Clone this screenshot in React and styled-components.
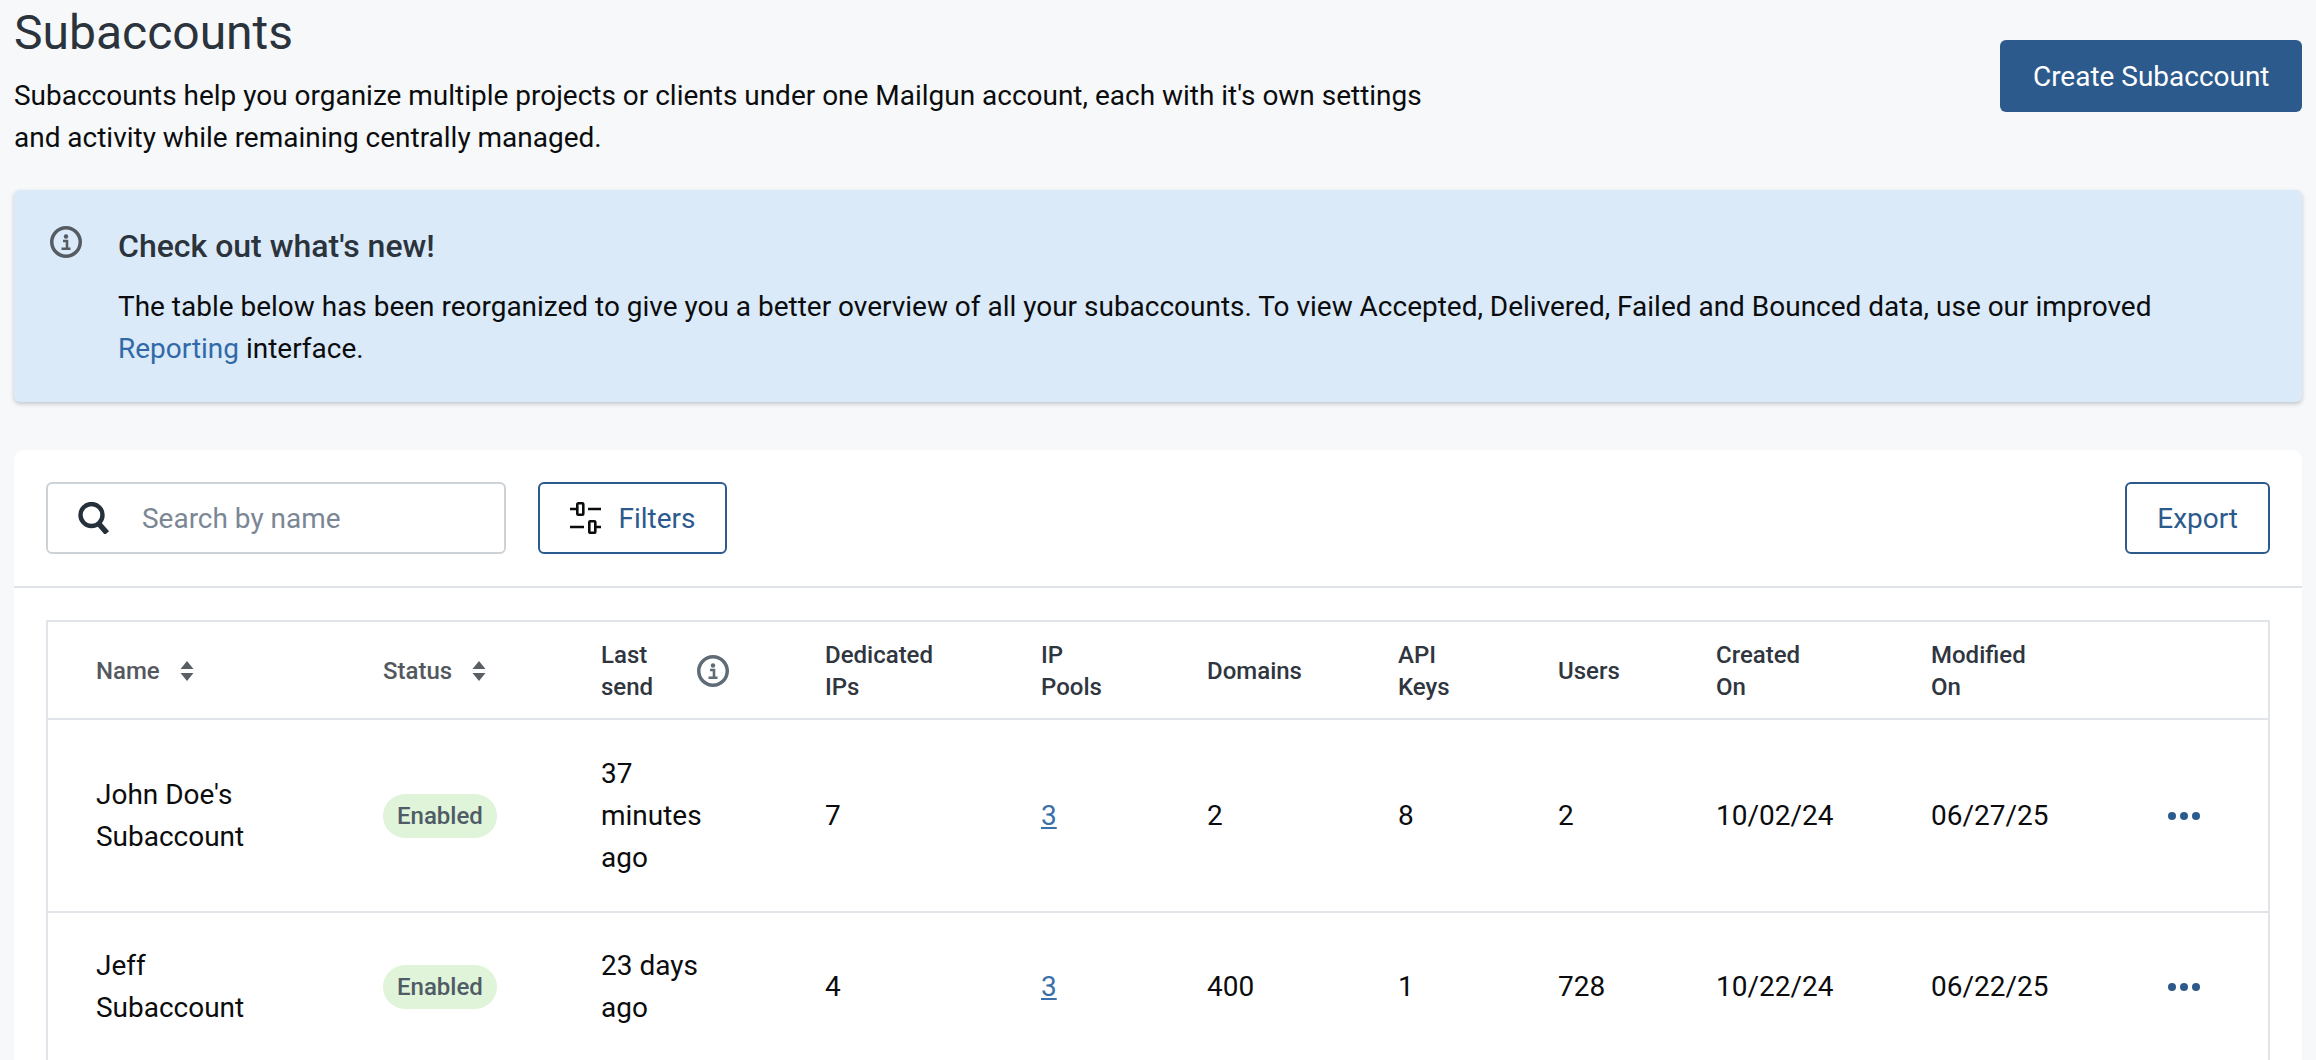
import React from "react";
import styled, { createGlobalStyle } from "styled-components";

const Global = createGlobalStyle`
  html, body { margin: 0; padding: 0; height: 100%; overflow: hidden; background: #f7f8fa; }
  body { font-family: Roboto, "Liberation Sans", sans-serif; font-size: 27.98px; line-height: 42px; color: #0b0c0e; }
  * { box-sizing: border-box; }
`;

const Page = styled.div`
  height: 1060px;
  overflow: hidden;
  padding: 0 14px;
`;
const Header = styled.header`
  display: flex;
  justify-content: space-between;
  align-items: flex-start;
  margin-bottom: 31px;
`;
const Title = styled.h1`
  margin: 3px 0 12px;
  font-size: 48px;
  line-height: 60px;
  font-weight: 400;
  color: #2b333d;
`;
const Description = styled.p`
  margin: 0;
  max-width: 1440px;
`;
const PrimaryButton = styled.button`
  margin-top: 40px;
  height: 72px;
  padding: 0 32.5px;
  border: 0;
  border-radius: 6px;
  background: #2c5a8c;
  color: #fff;
  font: 400 27.98px Roboto, sans-serif;
`;
const Alert = styled.section`
  display: flex;
  gap: 37px;
  padding: 36px 36px 32px 36px;
  margin-bottom: 48px;
  border-radius: 6px;
  background: #dbeaf9;
  box-shadow: 0 2px 4px rgba(40, 50, 60, 0.25);
`;
const AlertContent = styled.div`
  margin-left: -1px;
  padding-top: 1px;
`;
const AlertTitle = styled.h2`
  margin: 0 0 21px;
  font-size: 32px;
  line-height: 38px;
  font-weight: 500;
  color: #2b333d;
`;
const AlertText = styled.p`
  margin: 0;
`;
const Link = styled.a`
  color: #3169a8;
`;
const Card = styled.section`
  background: #fff;
  border-radius: 10px 10px 0 0;
`;
const Toolbar = styled.div`
  display: flex;
  align-items: center;
  gap: 32px;
  padding: 32px;
  border-bottom: 2px solid #e0e4e8;
`;
const SearchBox = styled.label`
  display: flex;
  align-items: center;
  gap: 32px;
  width: 460px;
  height: 72px;
  padding: 0 30px;
  border: 2px solid #cdd2d7;
  border-radius: 6px;
  background: #fff;
`;
const SearchInput = styled.input`
  flex: 1;
  min-width: 0;
  border: 0;
  outline: 0;
  padding: 0;
  background: transparent;
  font: 400 27.98px Roboto, sans-serif;
  &::placeholder { color: #7b8794; opacity: 1; }
`;
const OutlineButton = styled.button`
  display: flex;
  align-items: center;
  gap: ${(p) => (p.$icon ? "17px" : "0")};
  height: 72px;
  padding: 0 ${(p) => (p.$icon ? "29.5px" : "30px")};
  margin-left: ${(p) => (p.$end ? "auto" : "0")};
  border: 2px solid #2c5a8c;
  border-radius: 6px;
  background: #fff;
  color: #2c5a8c;
  font: 400 27.98px Roboto, sans-serif;
`;
const CardBody = styled.div`
  padding: 32px;
`;
const Table = styled.table`
  width: 100%;
  table-layout: fixed;
  border-collapse: separate;
  border-spacing: 0;
  border: 2px solid #e1e5e9;
  border-bottom: 0;
`;
const Th = styled.th`
  height: 98px;
  padding: 2px 0 0 ${(p) => (p.$first ? "48px" : "0")};
  text-align: left;
  font-size: 24px;
  line-height: 32px;
  font-weight: 500;
  color: ${(p) => (p.$sort ? "#53585e" : "#2f3640")};
  border-bottom: 2px solid #e1e5e9;
`;
const HeadInner = styled.span`
  display: flex;
  align-items: center;
  gap: ${(p) => p.$gap || "20px"};
`;
const Row = styled.tr`
  height: ${(p) => p.$height}px;
`;
const Td = styled.td`
  padding: 0 0 0 ${(p) => (p.$first ? "48px" : "0")};
  vertical-align: middle;
  border-bottom: 2px solid #e1e5e9;
`;
const Wrap = styled.span`
  display: block;
  max-width: ${(p) => p.$max};
`;
const Badge = styled.span`
  display: inline-flex;
  align-items: center;
  height: 44px;
  padding: 0 14px;
  border-radius: 22px;
  background: #dff4d8;
  color: #4f5b66;
  font-size: 24px;
  font-weight: 500;
  vertical-align: middle;
`;
const CountLink = styled.a`
  color: #3a6fa8;
  text-decoration: underline;
`;

const InfoIcon = ({ color = "#5f6b76" }) => (
  <svg width="32" height="32" viewBox="0 0 32 32" fill="none" style={{ flex: "none" }}>
    <circle cx="16" cy="16" r="14.25" stroke={color} strokeWidth="3.5" />
    <circle cx="16" cy="10.5" r="2.2" fill={color} />
    <path d="M13 15h4v7M11.5 22.8h9" stroke={color} strokeWidth="2.6" />
  </svg>
);
const SortIcon = () => (
  <svg width="14" height="20" viewBox="0 0 14 20" fill="#5a5f66" style={{ flex: "none" }}>
    <path d="M7 0l6.5 8H.5zM7 20L.5 12h13z" />
  </svg>
);
const SearchIcon = () => (
  <svg width="32" height="32" viewBox="0 0 32 32" fill="none" stroke="#26303a" style={{ flex: "none" }}>
    <circle cx="13.5" cy="13" r="11" strokeWidth="4.4" />
    <path d="M21 22l8 9" strokeWidth="5.5" />
  </svg>
);
const FiltersIcon = () => (
  <svg width="32" height="32" viewBox="0 0 32 32" fill="none" stroke="#0b0c0e" strokeWidth="2.6" style={{ flex: "none" }}>
    <rect x="7.3" y="1.3" width="6" height="11.5" rx="1" />
    <rect x="19.3" y="19.3" width="6" height="11.5" rx="1" />
    <path d="M0 7h7M18 7h13M0 25h14M25 25h6" />
  </svg>
);
const DotsIcon = () => (
  <svg width="32" height="8" viewBox="0 0 32 8" fill="#2c5a8c" style={{ display: "block" }}>
    <circle cx="4" cy="4" r="4" />
    <circle cx="16" cy="4" r="4" />
    <circle cx="28" cy="4" r="4" />
  </svg>
);

const widths = [335, 218, 224, 216, 166, 191, 160, 158, 215, 237, 100];

const rows = [
  { height: 193, name: "John Doe's Subaccount", last: "37 minutes ago", ips: 7, pools: 3, domains: 2, keys: 8, users: 2, created: "10/02/24", modified: "06/27/25" },
  { height: 150, name: "Jeff Subaccount", last: "23 days ago", ips: 4, pools: 3, domains: 400, keys: 1, users: 728, created: "10/22/24", modified: "06/22/25" },
];

export default function App() {
  return (
    <Page>
      <Global />
      <Header>
        <div>
          <Title>Subaccounts</Title>
          <Description>
            Subaccounts help you organize multiple projects or clients under one Mailgun account, each with it's own
            settings and activity while remaining centrally managed.
          </Description>
        </div>
        <PrimaryButton>Create Subaccount</PrimaryButton>
      </Header>
      <Alert>
        <InfoIcon color="#555b61" />
        <AlertContent>
          <AlertTitle>Check out what's new!</AlertTitle>
          <AlertText>
            The table below has been reorganized to give you a better overview of all your subaccounts. To view Accepted,
            Delivered, Failed and Bounced data, use our improved <Link>Reporting</Link> interface.
          </AlertText>
        </AlertContent>
      </Alert>
      <Card>
        <Toolbar>
          <SearchBox>
            <SearchIcon />
            <SearchInput placeholder="Search by name" />
          </SearchBox>
          <OutlineButton $icon>
            <FiltersIcon />
            Filters
          </OutlineButton>
          <OutlineButton $end>Export</OutlineButton>
        </Toolbar>
        <CardBody>
          <Table>
            <colgroup>
              {widths.map((w, i) => (
                <col key={i} width={w} />
              ))}
            </colgroup>
            <thead>
              <tr>
                <Th $first $sort>
                  <HeadInner>Name <SortIcon /></HeadInner>
                </Th>
                <Th $sort>
                  <HeadInner>Status <SortIcon /></HeadInner>
                </Th>
                <Th>
                  <HeadInner $gap="36px">
                    <Wrap $max="60px">Last send</Wrap>
                    <InfoIcon />
                  </HeadInner>
                </Th>
                <Th><Wrap $max="120px">Dedicated IPs</Wrap></Th>
                <Th><Wrap $max="80px">IP Pools</Wrap></Th>
                <Th>Domains</Th>
                <Th><Wrap $max="60px">API Keys</Wrap></Th>
                <Th>Users</Th>
                <Th><Wrap $max="100px">Created On</Wrap></Th>
                <Th><Wrap $max="110px">Modified On</Wrap></Th>
                <Th />
              </tr>
            </thead>
            <tbody>
              {rows.map((r) => (
                <Row key={r.name} $height={r.height}>
                  <Td $first><Wrap $max="190px">{r.name}</Wrap></Td>
                  <Td><Badge>Enabled</Badge></Td>
                  <Td><Wrap $max="120px">{r.last}</Wrap></Td>
                  <Td>{r.ips}</Td>
                  <Td><CountLink>{r.pools}</CountLink></Td>
                  <Td>{r.domains}</Td>
                  <Td>{r.keys}</Td>
                  <Td>{r.users}</Td>
                  <Td>{r.created}</Td>
                  <Td>{r.modified}</Td>
                  <Td><DotsIcon /></Td>
                </Row>
              ))}
            </tbody>
          </Table>
        </CardBody>
      </Card>
    </Page>
  );
}
